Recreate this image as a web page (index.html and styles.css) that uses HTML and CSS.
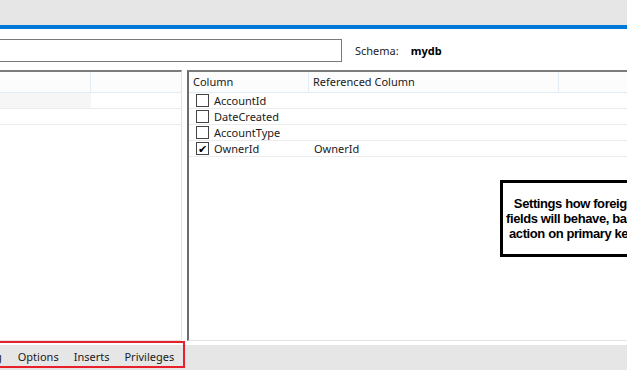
FILE: index.html
```html
<!DOCTYPE html>
<html lang="en">
<head>
    <meta charset="UTF-8">
    <title>Foreign Keys</title>
    <link rel="stylesheet" href="styles.css">
</head>
<body>

    <!-- Barre de titre -->
    <div class="titlebar"></div>
    <div class="accent"></div>

    <!-- Nom et schema -->
    <div class="namebar">
        <div class="namebox"></div>
        <span class="schema-label">Schema:</span>
        <span class="schema-value">mydb</span>
    </div>

    <!-- Deux grilles -->
    <div class="main">
        <div class="panel left">
            <div class="head">
                <div class="hcell first"></div>
                <div class="hcell"></div>
            </div>
            <div class="row">
                <div class="cell first shaded"></div>
                <div class="cell"></div>
            </div>
            <div class="row">
                <div class="cell first"></div>
                <div class="cell"></div>
            </div>
        </div>

        <div class="panel right">
            <div class="head">
                <div class="hcell col">Column</div>
                <div class="hcell ref">Referenced Column</div>
                <div class="hcell"></div>
            </div>
            <div class="row">
                <div class="cell col"><span class="check"></span>AccountId</div>
                <div class="cell ref"></div>
            </div>
            <div class="row">
                <div class="cell col"><span class="check"></span>DateCreated</div>
                <div class="cell ref"></div>
            </div>
            <div class="row">
                <div class="cell col"><span class="check"></span>AccountType</div>
                <div class="cell ref"></div>
            </div>
            <div class="row">
                <div class="cell col"><span class="check">&#10004;</span>OwnerId</div>
                <div class="cell ref">OwnerId</div>
            </div>
        </div>
    </div>

    <!-- Onglets -->
    <div class="tabs">
        <span class="tab cut">g</span>
        <span class="tab">Options</span>
        <span class="tab">Inserts</span>
        <span class="tab">Privileges</span>
    </div>

    <!-- Annotations -->
    <div class="redbox"></div>
    <div class="note">
        Settings how foreign key<br>
        fields will behave, based on<br>
        action on primary key field
    </div>

</body>
</html>
```

FILE: styles.css
```css
body {
    margin: 0;
    font-family: "Noto Sans", "Liberation Sans", sans-serif;
    font-size: 11px;
    color: #1a1a1a;
    background: white;
    width: 627px;
    height: 370px;
    overflow: hidden;
    position: relative;
}

/* Barre du haut */
.titlebar {
    height: 25px;
    background-color: #e6e6e6;
}

.accent {
    height: 4px;
    background-color: #0078d7;
}

.namebar {
    height: 41px;
    display: flex;
    align-items: flex-start;
}

.namebox {
    margin-top: 10px;
    margin-left: -2px;
    width: 342px;
    height: 21px;
    border: 1px solid #7a7a7a;
    background: white;
}

.schema-label {
    margin-top: 14px;
    margin-left: 13px;
}

.schema-value {
    margin-top: 14px;
    margin-left: 12px;
    font-weight: bold;
    color: #000;
}

/* Grilles */
.main {
    display: flex;
    gap: 5px;
    height: 271px;
}

.panel {
    border-top: 2px solid #7b7b7b;
    border-bottom: 1px solid #e3e3e3;
    box-sizing: border-box;
    height: 271px;
}

.left {
    width: 182px;
    border-right: 1px solid #e3e3e3;
}

.right {
    flex: 1;
    border-left: 2px solid #6d6d6d;
}

.head {
    display: flex;
    height: 20px;
    background: #fcfcfc;
    border-bottom: 1px solid #e3ecf7;
}

.hcell {
    border-right: 1px solid #e3ecf7;
    padding-left: 4px;
    line-height: 20px;
    box-sizing: border-box;
}

.hcell:last-child {
    flex: 1;
    border-right: none;
}

.row {
    display: flex;
    height: 15px;
    border-bottom: 1px solid #ececec;
}

.cell {
    line-height: 15px;
    box-sizing: border-box;
}

.left .first {
    width: 91px;
}

.shaded {
    background: #f6f6f6;
}

.right .col {
    width: 120px;
}

.right .ref {
    width: 250px;
}

.right .cell.col {
    padding-left: 7px;
    display: flex;
    align-items: center;
}

.right .cell.ref {
    padding-left: 5px;
}

.check {
    width: 11px;
    height: 11px;
    border: 1px solid #444;
    margin-right: 5px;
    font-size: 11px;
    line-height: 11px;
    text-align: center;
    color: #000;
}

/* Onglets */
.tabs {
    position: absolute;
    left: 0;
    right: 0;
    bottom: 0;
    height: 25px;
    background: #e6e6e6;
    display: flex;
    align-items: center;
    font-size: 11px;
    padding-bottom: 3px;
    box-sizing: border-box;
}

.tab {
    margin-right: 15px;
}

.cut {
    margin-left: -5px;
    margin-right: 16px;
}

/* Annotations par-dessus */
.redbox {
    position: absolute;
    left: -2px;
    top: 341px;
    width: 183px;
    height: 23px;
    border: 2px solid #e8202a;
}

.note {
    position: absolute;
    left: 500px;
    top: 180px;
    width: 166px;
    height: 58px;
    border: 3px solid #000;
    background: white;
    font-family: "Liberation Sans", Arial, sans-serif;
    font-weight: bold;
    font-size: 13px;
    letter-spacing: -0.4px;
    line-height: 15px;
    text-align: center;
    padding-top: 13px;
    color: #000;
}
```
